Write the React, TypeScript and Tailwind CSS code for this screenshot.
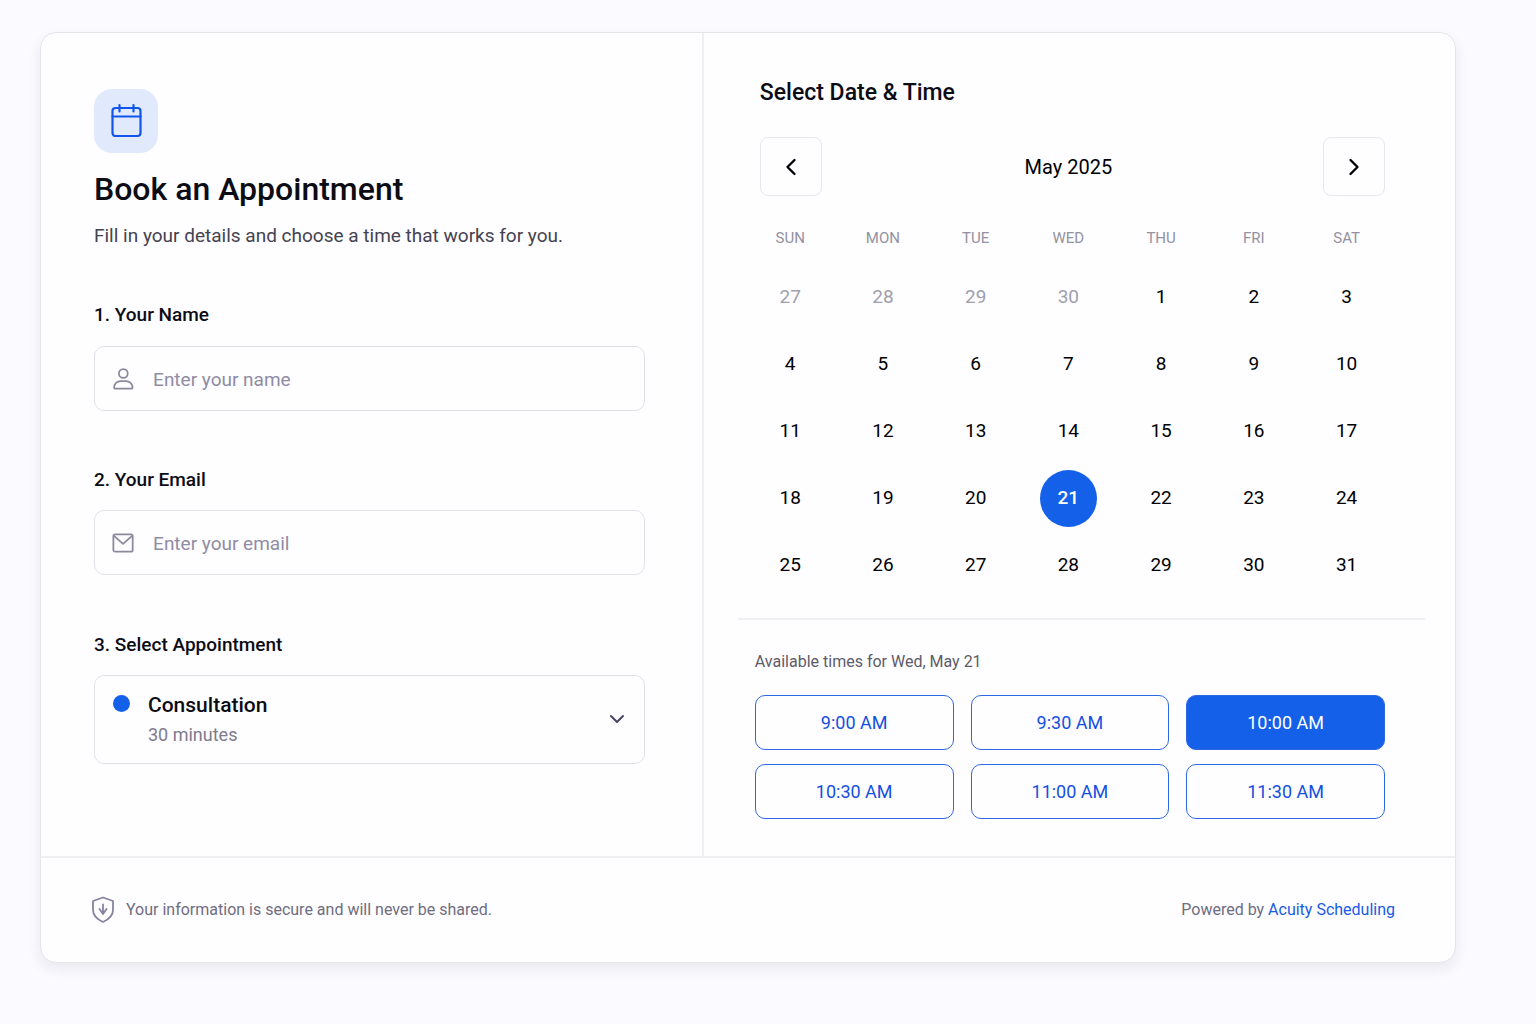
import clsx from "clsx";
import { ChevronDown, ChevronLeft, ChevronRight } from "lucide-react";
import { useState } from "react";

const WEEKDAYS = ["SUN", "MON", "TUE", "WED", "THU", "FRI", "SAT"];
const WEEKS = [
    [27, 28, 29, 30, 1, 2, 3],
    [4, 5, 6, 7, 8, 9, 10],
    [11, 12, 13, 14, 15, 16, 17],
    [18, 19, 20, 21, 22, 23, 24],
    [25, 26, 27, 28, 29, 30, 31],
];
const TIMES = ["9:00 AM", "9:30 AM", "10:00 AM", "10:30 AM", "11:00 AM", "11:30 AM"];

function CalendarIcon() {
    return (
        <svg className="size-9" viewBox="0 0 36 36" fill="none" stroke="#0f55ee" strokeWidth="2.2" strokeLinecap="round" strokeLinejoin="round">
            <rect x="4.5" y="5" width="28" height="28" rx="3" />
            <path d="M4.5 13.500h28M11.500 2v6.500M25.500 2v6.500" />
        </svg>
    );
}

function UserIcon() {
    return (
        <svg className="size-6" viewBox="0 0 24 24" fill="none" stroke="#8b899b" strokeWidth="1.9" strokeLinejoin="round">
            <circle cx="12.3" cy="6" r="4.8" />
            <path d="M3.500 22.500h17.600a1.200 1.200 0 0 0 1.200-1.200c0-4.300-3.300-7-7.200-7H9.500c-3.900 0-7.200 2.700-7.200 7a1.200 1.200 0 0 0 1.200 1.200Z" />
        </svg>
    );
}

function MailIcon() {
    return (
        <svg className="size-6" viewBox="0 0 24 24" fill="none" stroke="#8b899b" strokeWidth="1.9" strokeLinecap="round" strokeLinejoin="round">
            <rect x="1.500" y="2.500" width="21" height="19" rx="2" />
            <path d="m2.500 4.500 9.500 8.500 9.500-8.500" />
        </svg>
    );
}

function ShieldIcon() {
    return (
        <svg className="h-7 w-6" viewBox="0 0 24 28" fill="none" stroke="#8683a0" strokeWidth="1.8" strokeLinecap="round" strokeLinejoin="round">
            <path d="M12 1.500 22 5v9c0 5.500-4.500 9.500-10 12-5.500-2.500-10-6.500-10-12V5Z" />
            <path d="M12 8.500V18M8.500 13l3.500 5 3.500-5" />
        </svg>
    );
}

export default function App() {
    const [name, setName] = useState("");
    const [email, setEmail] = useState("");
    const [day, setDay] = useState(21);
    const [time, setTime] = useState("10:00 AM");

    return (
        <div className="min-h-screen bg-[#fbfaff] pt-8 pr-20 pb-15 pl-10 font-[Roboto,'Liberation_Sans',sans-serif] text-[#0c0c14]">
            <main className="rounded-2xl border border-[#e4e4ea] bg-[#fefdff] shadow-[0_6px_14px_rgba(30,30,60,0.08)]">
                <div className="grid grid-cols-[15fr_17fr] border-b-2 border-[#f0eff3]">
                    <section className="border-r-2 border-[#f0eff3] pt-14 pr-[57px] pl-[53px]">
                        <div className="flex size-16 items-center justify-center rounded-[18px] bg-[#e1eafd]">
                            <CalendarIcon />
                        </div>
                        <h1 className="mt-4 text-[32px] leading-10 font-medium">Book an Appointment</h1>
                        <p className="mt-[13px] text-[19px] leading-7 text-[#44434f]">Fill in your details and choose a time that works for you.</p>

                        <label htmlFor="name" className="mt-[51px] block text-[19px] leading-7 font-medium">1. Your Name</label>
                        <div className="mt-[17px] flex h-[65px] items-center gap-[19px] rounded-[10px] border border-[#e2e1ea] px-[17px]">
                            <UserIcon />
                            <input id="name" type="text" className="w-full pt-1 text-[19px] outline-none placeholder:text-[#8f8ca3]" placeholder="Enter your name" value={name} onChange={(e) => setName(e.target.value)} />
                        </div>

                        <label htmlFor="email" className="mt-[55px] block text-[19px] leading-7 font-medium">2. Your Email</label>
                        <div className="mt-4 flex h-[65px] items-center gap-[19px] rounded-[10px] border border-[#e2e1ea] px-[17px]">
                            <MailIcon />
                            <input id="email" type="email" className="w-full pt-1 text-[19px] outline-none placeholder:text-[#8f8ca3]" placeholder="Enter your email" value={email} onChange={(e) => setEmail(e.target.value)} />
                        </div>

                        <label htmlFor="appointment" className="mt-14 block text-[19px] leading-7 font-medium">3. Select Appointment</label>
                        <div className="relative mt-4">
                            <select id="appointment" className="h-[89px] w-full appearance-none rounded-[10px] border border-[#e2e1ea] bg-transparent pr-12 pb-[27px] pl-[53px] text-[21px] font-medium">
                                <option>Consultation</option>
                            </select>
                            <span className="pointer-events-none absolute top-5 left-[19px] size-[17px] rounded-full bg-[#1560e8]" />
                            <span className="pointer-events-none absolute top-12 left-[54px] text-lg leading-6 text-[#7d7b8c]">30 minutes</span>
                            <ChevronDown className="pointer-events-none absolute top-8 right-4 size-6 text-[#4a4563]" />
                        </div>
                    </section>

                    <section className="pt-[46px] pb-[37px]">
                        <div className="pr-[70px] pl-14">
                            <h2 className="text-[23px] leading-7 font-medium">Select Date &amp; Time</h2>
                            <div className="mt-[30px] flex items-center justify-between">
                                <button aria-label="Previous month" className="flex h-[59px] w-[62px] items-center justify-center rounded-lg border border-[#e8e7ec]">
                                    <ChevronLeft className="size-7 text-black" />
                                </button>
                                <p className="pr-2 text-xl text-black">May 2025</p>
                                <button aria-label="Next month" className="flex h-[59px] w-[62px] items-center justify-center rounded-lg border border-[#e8e7ec]">
                                    <ChevronRight className="size-7 text-black" />
                                </button>
                            </div>
                        </div>

                        <div className="mt-6 pr-[62px] pl-10">
                            <table className="w-full table-fixed text-center">
                                <thead>
                                    <tr className="h-11 align-top">
                                        {WEEKDAYS.map((d) => (
                                            <th key={d} scope="col" className="pt-1.5 text-[15px] leading-6 font-normal text-[#9392a0]">{d}</th>
                                        ))}
                                    </tr>
                                </thead>
                                <tbody>
                                    {WEEKS.map((week, i) => (
                                        <tr key={i} className="h-[67px]">
                                            {week.map((d) => {
                                                const other = i === 0 && d > 7;
                                                const selected = !other && d === day;
                                                return (
                                                    <td key={d} className="p-0">
                                                        <button
                                                            disabled={other}
                                                            onClick={() => setDay(d)}
                                                            className={clsx(
                                                                "inline-flex size-[57px] items-center justify-center rounded-full align-middle text-[19px]",
                                                                other && "text-[#a09fab]",
                                                                selected && "bg-[#1560e8] font-medium text-white",
                                                                !other && !selected && "text-black",
                                                            )}
                                                        >
                                                            {d}
                                                        </button>
                                                    </td>
                                                );
                                            })}
                                        </tr>
                                    ))}
                                </tbody>
                            </table>
                        </div>

                        <hr className="mt-[19px] mr-[30px] ml-[34px] border-t-2 border-[#f0eff3]" />

                        <div className="mt-[30px] pr-[70px] pl-[51px]">
                            <p className="text-base leading-6 text-[#5d5c68]">Available times for Wed, May {day}</p>
                            <div className="mt-[21px] grid grid-cols-3 gap-x-[17px] gap-y-3.5">
                                {TIMES.map((t) => (
                                    <button
                                        key={t}
                                        onClick={() => setTime(t)}
                                        className={clsx(
                                            "h-[55px] rounded-[10px] border border-[#2f68e6] text-lg",
                                            t === time ? "bg-[#1560e8] text-white" : "text-[#1450e0]",
                                        )}
                                    >
                                        {t}
                                    </button>
                                ))}
                            </div>
                        </div>
                    </section>
                </div>

                <footer className="flex h-[104px] items-center justify-between pr-[60px] pl-[50px] text-base">
                    <p className="flex items-center gap-[11px] text-[#6f6d80]">
                        <ShieldIcon />
                        Your information is secure and will never be shared.
                    </p>
                    <p className="text-[#6f6d80]">
                        Powered by <a href="#" className="text-[#1a5be6]">Acuity Scheduling</a>
                    </p>
                </footer>
            </main>
        </div>
    );
}
